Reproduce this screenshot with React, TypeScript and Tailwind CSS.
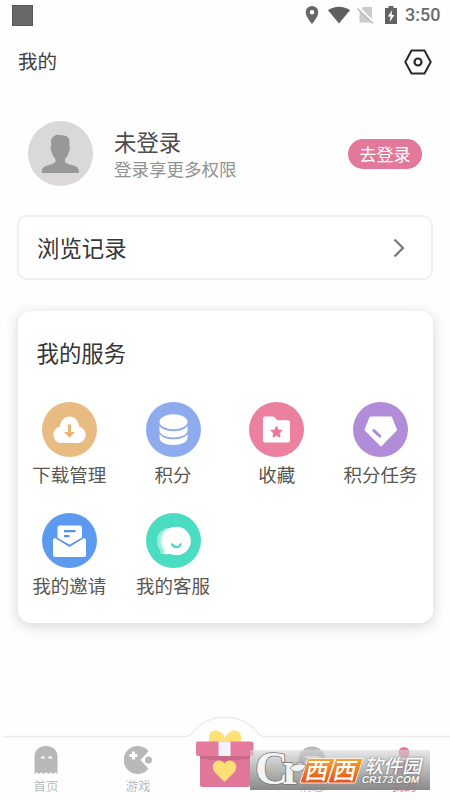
import type { ReactNode } from 'react';

type Service = {
  label: string;
  color: string;
  icon: ReactNode;
};

const DownloadIcon = () => (
  <svg viewBox="0 0 55 55" className="h-[55px] w-[55px]">
    <path d="M19 41a8.200 8.200 0 0 1-1.200-16.200C18.800 18.500 22.500 14.500 27.500 14.500s8.700 4 9.700 10.300A8.200 8.200 0 0 1 36 41Z" fill="#fff" />
    <path d="M26 22.500h3V30h4l-5.500 5.800L22 30h4Z" fill="#e6b678" />
  </svg>
);

const CoinsIcon = () => (
  <svg viewBox="0 0 55 55" className="h-[55px] w-[55px]" fill="#fff">
    <ellipse cx="27.500" cy="19.700" rx="14" ry="7.500" />
    <path d="M13.500 23.800c2 3.700 7.500 5.400 14 5.400s12-1.700 14-5.400v4.700c0 4-6.300 7-14 7s-14-3-14-7Z" />
    <path d="M13.500 31.800c2 3.700 7.500 5.500 14 5.500s12-1.800 14-5.500v4c0 4.200-6.300 7.200-14 7.200s-14-3-14-7.200Z" />
  </svg>
);

const FavoriteIcon = () => (
  <svg viewBox="0 0 55 55" className="h-[55px] w-[55px]">
    <path d="M16 14.500h7.800c1 0 1.500.4 2.200 1.200l2.200 2.500H39a2 2 0 0 1 2 2V38.500a2 2 0 0 1-2 2H16a2 2 0 0 1-2-2v-22a2 2 0 0 1 2-2Z" fill="#fff" />
    <path d="m27.500 24.300 1.700 3.600 3.900.5-2.800 2.800.7 4-3.500-1.900-3.500 1.900.7-4-2.800-2.800 3.900-.5Z" fill="#e8799b" stroke="#e8799b" strokeLinejoin="round" />
  </svg>
);

const DiamondIcon = () => (
  <svg viewBox="0 0 55 55" className="h-[55px] w-[55px]">
    <path d="M17.500 15.500h20.500l5 12.300L28 43.200 12.500 27.800Z" fill="#fff" stroke="#fff" strokeWidth="2" strokeLinejoin="round" />
    <path d="m20.800 28.500 6 5.500" stroke="#a889d8" strokeWidth="3" strokeLinecap="round" />
  </svg>
);

const InviteIcon = () => (
  <svg viewBox="0 0 55 55" className="h-[55px] w-[55px]">
    <path d="M18 12.500h19.500a2.500 2.500 0 0 1 2.500 2.500v10.500L27.500 32l-12-6.500V15a2.500 2.500 0 0 1 2.500-2.500Z" fill="#fff" />
    <path d="M22 18.200h11.500M22 23.200h5.500" stroke="#5793ea" strokeWidth="2.300" />
    <path d="M11 27.500c0-2 1.800-2.700 3.300-1.800L27.500 34l13.200-8.300c1.500-.9 3.300-.2 3.300 1.800v14a2.500 2.500 0 0 1-2.500 2.500h-28a2.500 2.500 0 0 1-2.500-2.500Z" fill="#fff" />
    <path d="m15 25.300 12.500 7.200L40 25.300" fill="none" stroke="#5793ea" strokeWidth="1.400" />
  </svg>
);

const SupportIcon = () => (
  <svg viewBox="0 0 55 55" className="h-[55px] w-[55px]">
    <path d="M24 15c-8 0-13 6-13 12.500 0 5 1.500 8 3.500 10V41l6-.5Z" fill="#fff" opacity=".45" />
    <path d="M27 14.500c-8 0-12.500 6-12.500 13 0 5.500 2 8 3 9.800V41l6-1Z" fill="#fff" opacity=".5" />
    <circle cx="30.500" cy="28" r="14.300" fill="#fff" />
    <path d="M18.500 34c.8 3 .8 5-.5 7 3 .6 6 .3 9-.5Z" fill="#fff" />
    <path d="M26 31.300c1.800 3.700 6.800 3.700 8.700 0" fill="none" stroke="#44d9bd" strokeWidth="2.200" strokeLinecap="round" />
  </svg>
);

const services: Service[] = [
  { label: '下载管理', color: 'bg-[#e8bb82]', icon: <DownloadIcon /> },
  { label: '积分', color: 'bg-[#8eabed]', icon: <CoinsIcon /> },
  { label: '收藏', color: 'bg-[#eb809f]', icon: <FavoriteIcon /> },
  { label: '积分任务', color: 'bg-[#b08cd9]', icon: <DiamondIcon /> },
  { label: '我的邀请', color: 'bg-[#5c9aef]', icon: <InviteIcon /> },
  { label: '我的客服', color: 'bg-[#4bddc1]', icon: <SupportIcon /> },
];

const StatusBar = () => (
  <div className="flex h-[30px] items-center pl-3 pr-[10px]">
    <div className="h-[21px] w-[21px] border border-[#555] bg-[#686868]" />
    <div className="ml-auto flex items-center">
      <svg viewBox="0 0 14 18" className="h-[18px] w-[14px]">
        <path fillRule="evenodd" d="M7 0a6.300 6.300 0 0 0-6.300 6.300C.7 11 7 18 7 18s6.300-7 6.300-11.700A6.300 6.300 0 0 0 7 0Zm0 4a2.300 2.300 0 1 1 0 4.600A2.300 2.300 0 0 1 7 4Z" fill="#666" />
      </svg>
      <svg viewBox="0 0 22 18" className="ml-[9px] h-[18px] w-[22px]">
        <path d="M0 4.300C6-.6 16-.6 22 4.300L11 17.500Z" fill="#5f5f5f" />
      </svg>
      <svg viewBox="0 0 18 18" className="ml-[7px] h-[18px] w-[18px]">
        <path d="M6 1h9v15.500H2.500V5Z" fill="#cbcbcb" />
        <path d="m1 1 16 16" stroke="#fff" strokeWidth="2.500" />
        <path d="m.5 2.500 15.500 15" stroke="#bbb" strokeWidth="1.400" />
      </svg>
      <svg viewBox="0 0 12 18" className="ml-[10px] h-[18px] w-[12px]">
        <path d="M3.500 0h5v2H12v16H0V2h3.500Z" fill="#626262" />
        <path d="M7.300 4 2.800 10.500h2.700L4.700 16l4.700-7H6.500Z" fill="#fff" />
      </svg>
      <span className="ml-2 w-[35px] font-[Roboto] text-[18px] leading-5 font-medium text-[#6b6b6b]">3:50</span>
    </div>
  </div>
);

const Profile = () => (
  <div className="mt-[28px] flex h-[65px] items-center pl-7 pr-7">
    <svg viewBox="0 0 65 65" className="h-[65px] w-[65px] shrink-0">
      <circle cx="32.500" cy="32.500" r="32.500" fill="#dad8d9" />
      <path d="M26.500 15c1-1.200 3-1.300 5-1 3.500.3 5.500.3 8 2 1.500 1 2 3.500 2 6.500v3c.7 1 .5 4-.7 5.500-.6 3-2 5-3.800 7v3c2 2.500 9 3 11.800 5 2 1.500 2.200 3.500 2.200 6H13.700c0-2.500.2-4.500 2.200-6 2.800-2 9.800-2.500 11.600-5v-3c-1.800-2-3.200-4-3.800-7-1.200-1.500-1.400-4.500-.7-5.500v-3c0-3.500.5-6.500 3.500-7.500Z" fill="#989898" />
    </svg>
    <div className="ml-[21px]">
      <div className="text-[22.400px] leading-[30px] text-[#4d4d4d]">未登录</div>
      <div className="text-[17.500px] leading-[25px] text-[#929292]">登录享更多权限</div>
    </div>
    <button className="ml-auto h-[30px] w-[74px] rounded-full bg-[#e2789a] text-[17.200px] leading-[28px] text-white">去登录</button>
  </div>
);

const BottomNav = () => (
  <nav className="relative mt-auto h-[84px] w-full text-[12.500px] leading-4 text-[#bdbdbd]">
    <svg viewBox="0 0 450 84" className="absolute inset-0 h-[84px] w-[450px]">
      <path d="M3 20.500h183c3 0 4-1 6-3.500 17-21 49-21 66 0 2 2.500 3 3.500 6 3.500h186" fill="none" stroke="#ececec" strokeWidth="1.400" />
    </svg>
    <div className="relative flex h-full items-end pb-[6px]">
      <div className="flex w-[92px] flex-col items-center">
        <svg viewBox="0 0 24 28" className="h-[28px] w-[24px]">
          <path d="M.5 28V11C.5 4 5 0 12 0s11.500 4 11.500 11v17l-2.200-1.800L19 28l-2.400-1.800-2.300 1.800-2.300-1.800L9.700 28l-2.400-1.800L5 28l-2.300-1.800Z" fill="#b8b8b8" />
          <path d="M7 11.500h3.500M14.500 11.500H18" stroke="#fff" strokeWidth="2" />
        </svg>
        <span className="mt-1">首页</span>
      </div>
      <div className="flex w-[92px] flex-col items-center">
        <svg viewBox="0 0 29 28" className="h-[28px] w-[29px]">
          <path d="M24.500 5.200A14 14 0 1 0 24.500 22.800L16.500 14Z" fill="#b8b8b8" />
          <path d="M9.500 5.500v8M5.500 9.500h8" stroke="#fff" strokeWidth="3" />
          <circle cx="24.500" cy="14" r="3.500" fill="#b8b8b8" />
        </svg>
        <span className="mt-1">游戏</span>
      </div>
      <div className="flex w-[82px] justify-center pb-[7px]">
        <svg viewBox="0 0 58 57" className="h-[57px] w-[58px]">
          <path d="M29 8C27 3 23 .5 19 .5c-4 0-6 3-6 6.500v6h32V7c0-3.500-2-6.500-6-6.500S31 3 29 8Z" fill="#ffe077" />
          <path d="M4 20h50v35a2 2 0 0 1-2 2H6a2 2 0 0 1-2-2Z" fill="#e07799" />
          <path d="M4 25.500h50v3L28.500 31 4 28.500Z" fill="#c96784" />
          <rect y="11.500" width="57.500" height="14.500" rx="2" fill="#e47b9d" />
          <path d="M22.500 11.500h12v14.500h-12Z" fill="#f4f3f9" />
          <path d="M28.500 52 19 42.500C12 34 23 26 28.500 33.500 34 26 45 34 38 42.500Z" fill="#ffe077" />
        </svg>
      </div>
      <div className="flex w-[92px] flex-col items-center">
        <svg viewBox="0 0 28 28" className="h-[28px] w-[28px]">
          <circle cx="14" cy="14" r="13.500" fill="#b8b8b8" />
          <path d="M7 11h14M7 16h10" stroke="#fff" strokeWidth="2" />
        </svg>
        <span className="mt-1">消息</span>
      </div>
      <div className="flex w-[92px] flex-col items-center text-[#e2789a]">
        <svg viewBox="0 0 28 28" className="h-[28px] w-[28px]" fill="#e2789a">
          <circle cx="14" cy="6.500" r="5.500" />
          <path d="M3 28c0-9 4-14 11-14s11 5 11 14Z" />
        </svg>
        <span className="mt-1">我的</span>
      </div>
    </div>
  </nav>
);

const Watermark = () => (
  <div className="absolute left-[250px] top-[750px] h-10 w-[180px] bg-gradient-to-b from-[#d8d8d8]/60 to-[#838383]/95">
    <svg viewBox="0 0 180 40" className="absolute inset-0 h-10 w-[180px]">
      <defs>
        <linearGradient id="orange" x1="0" y1="0" x2="0" y2="1">
          <stop stopColor="#f4a72d" />
          <stop offset="1" stopColor="#e5501c" />
        </linearGradient>
      </defs>
      <path d="M58 8.500h27L77 33H50ZM86 8.500h27L105 33H78Z" fill="url(#orange)" stroke="#f8eee5" strokeWidth="1" />
    </svg>
    <span className="absolute left-[5px] top-[-4px] font-['Liberation_Serif'] text-[46px] leading-[46px] font-bold tracking-[-6px] whitespace-nowrap text-[#f3f3f3] [paint-order:stroke_fill] [-webkit-text-stroke:1.6px_#777]">Cr</span>
    {/* leaf at the end of the r */}
    <svg viewBox="0 0 20 12" className="absolute left-[39px] top-[12px] h-3 w-5">
      <path d="M1 6c4-4 9-5 16-3-2 6-8 8-13 6Z" fill="#f3f3f3" stroke="#777" strokeWidth=".7" />
    </svg>
    <span className="absolute left-[56px] top-[7px] -skew-x-12 text-[23px] leading-[25px] font-medium tracking-[5px] whitespace-nowrap text-white">西西</span>
    <span className="absolute left-[116px] top-[5px] -skew-x-12 text-[19px] leading-[20px] font-medium whitespace-nowrap text-white [text-shadow:0_0_2px_#555]">软件园</span>
    <span className="absolute left-[112px] top-[25px] -skew-x-12 font-['Liberation_Sans'] text-[10px] leading-[10px] font-bold whitespace-nowrap text-white [text-shadow:0_0_2px_#444]">CR173.COM</span>
  </div>
);

const App = () => {
  return (
    <div className="relative flex h-[800px] w-[450px] flex-col overflow-hidden bg-[#fefefe] font-['Noto_Sans_CJK_SC',sans-serif]">
      <StatusBar />
      <header className="flex h-[63px] items-center justify-between pl-[18px] pr-[18px]">
        <h1 className="pb-[2px] text-[19.500px] leading-7 text-[#404040]">我的</h1>
        <svg viewBox="0 0 28 26" className="h-[26px] w-[28px]" fill="none" stroke="#292929">
          <path d="M7.500 1.500h13L26.700 13l-6.200 11.500h-13L1.300 13Z" strokeWidth="2" strokeLinejoin="round" />
          <circle cx="14" cy="13" r="3.500" strokeWidth="2.200" />
        </svg>
      </header>
      <Profile />

      <div className="mx-[17px] mt-[29px] flex h-[65px] items-center justify-between rounded-[10px] border-2 border-[#efefef] bg-white pl-[18px] pr-[26px]">
        <span className="pb-[2px] text-[22.400px] leading-8 text-[#353535]">浏览记录</span>
        <svg viewBox="0 0 12 20" className="h-5 w-3" fill="none" stroke="#777" strokeWidth="2.200">
          <path d="m1.500 1.500 8.500 8.500-8.500 8.500" />
        </svg>
      </div>

      <section className="mx-[17.500px] mt-[31px] h-[312px] rounded-[13px] bg-white pt-[25px] shadow-[0_3px_14px_rgba(0,0,0,0.17)]">
        <h2 className="pl-[19px] text-[22.400px] leading-8 text-[#353535]">我的服务</h2>
        <div className="mt-[34px] grid grid-cols-4 gap-y-[26px]">
          {services.map((service) => (
            <div key={service.label} className="flex h-[85px] flex-col items-center">
              <div className={`h-[55px] w-[55px] rounded-full ${service.color}`}>{service.icon}</div>
              <span className="mt-[3px] text-[18.500px] leading-[28px] text-[#595550]">{service.label}</span>
            </div>
          ))}
        </div>
      </section>

      <BottomNav />
      <Watermark />
    </div>
  );
};

export default App;
